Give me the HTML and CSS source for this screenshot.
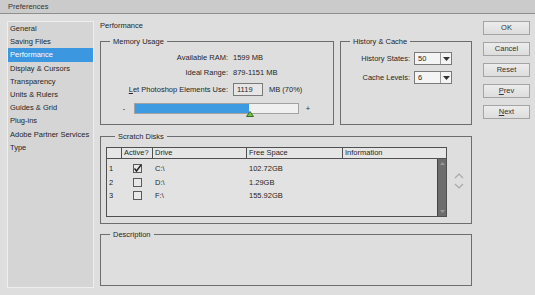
FILE: index.html
```html
<!DOCTYPE html>
<html>
<head>
<meta charset="utf-8">
<title>Preferences</title>
<link rel="stylesheet" href="styles.css">
</head>
<body>
<div class="window">
  <div class="titlebar">Preferences</div>
  <div class="content">
    <ul class="sidebar">
      <li class="nav-item">General</li>
      <li class="nav-item">Saving Files</li>
      <li class="nav-item selected">Performance</li>
      <li class="nav-item">Display &amp; Cursors</li>
      <li class="nav-item">Transparency</li>
      <li class="nav-item">Units &amp; Rulers</li>
      <li class="nav-item">Guides &amp; Grid</li>
      <li class="nav-item">Plug-ins</li>
      <li class="nav-item">Adobe Partner Services</li>
      <li class="nav-item">Type</li>
    </ul>

    <div class="main">
      <div class="page-title">Performance</div>
      <div class="top-row">
        <fieldset class="group mem">
          <legend>Memory Usage</legend>
          <div class="mem-row r1"><span class="lbl">Available RAM:</span><span class="val">1599 MB</span></div>
          <div class="mem-row r2"><span class="lbl">Ideal Range:</span><span class="val">879-1151 MB</span></div>
          <div class="mem-row r3"><span class="lbl"><u>L</u>et Photoshop Elements Use:</span><span class="val"><span class="numbox">1119</span><span class="pct">MB (70%)</span></span></div>
          <div class="slider-row">
            <span class="sign minus">-</span>
            <div class="track">
              <div class="fill" style="width:70%"></div>
              <svg class="thumb" width="8" height="6" viewBox="0 0 8 6"><path d="M4 0.5 L7.5 5.5 L0.5 5.5 Z" fill="#7ac143" stroke="#3b6b2a" stroke-width="1"/></svg>
            </div>
            <span class="sign plus">+</span>
          </div>
        </fieldset>
        <fieldset class="group hist">
          <legend>History &amp; Cache</legend>
          <div class="hist-row"><span class="hlbl">History States:</span>
            <div class="select"><span class="sel-val">50</span><span class="sel-btn"><svg width="7" height="4" viewBox="0 0 7 4"><path d="M0 0 H7 L3.5 4 Z" fill="#333"/></svg></span></div>
          </div>
          <div class="hist-row"><span class="hlbl">Cache Levels:</span>
            <div class="select"><span class="sel-val">6</span><span class="sel-btn"><svg width="7" height="4" viewBox="0 0 7 4"><path d="M0 0 H7 L3.5 4 Z" fill="#333"/></svg></span></div>
          </div>
        </fieldset>
      </div>

      <fieldset class="group scratch">
        <legend>Scratch Disks</legend>
        <div class="scratch-inner">
          <div class="table">
            <div class="thead">
              <div class="th"></div>
              <div class="th">Active?</div>
              <div class="th">Drive</div>
              <div class="th">Free Space</div>
              <div class="th last">Information</div>
            </div>
            <div class="tbody">
              <div class="rows">
                <div class="tr"><div class="td">1</div><div class="td c"><span class="cb"><svg width="9" height="9" viewBox="0 0 9 9"><path d="M1.5 4.5 L3.5 7 L8 1" fill="none" stroke="#222" stroke-width="1.4"/></svg></span></div><div class="td">C:\</div><div class="td">102.72GB</div><div class="td"></div></div>
                <div class="tr"><div class="td">2</div><div class="td c"><span class="cb"></span></div><div class="td">D:\</div><div class="td">1.29GB</div><div class="td"></div></div>
                <div class="tr"><div class="td">3</div><div class="td c"><span class="cb"></span></div><div class="td">F:\</div><div class="td">155.92GB</div><div class="td"></div></div>
              </div>
              <div class="scrollbar">
                <svg class="sb-arrow" width="5" height="3" viewBox="0 0 5 3"><path d="M0 3 L2.5 0 L5 3 Z" fill="#999"/></svg>
                <svg class="sb-arrow" width="5" height="3" viewBox="0 0 5 3"><path d="M0 0 L2.5 3 L5 0 Z" fill="#999"/></svg>
              </div>
            </div>
          </div>
          <div class="movers">
            <svg width="10" height="6" viewBox="0 0 10 6"><path d="M1 5 L5 1 L9 5" fill="none" stroke="#a8a8a8" stroke-width="1.2"/></svg>
            <svg width="10" height="6" viewBox="0 0 10 6"><path d="M1 1 L5 5 L9 1" fill="none" stroke="#a8a8a8" stroke-width="1.2"/></svg>
          </div>
        </div>
      </fieldset>

      <fieldset class="group desc">
        <legend>Description</legend>
      </fieldset>
    </div>

    <div class="buttons">
      <div class="btn">OK</div>
      <div class="btn">Cancel</div>
      <div class="btn">Reset</div>
      <div class="btn"><u>P</u>rev</div>
      <div class="btn"><u>N</u>ext</div>
    </div>
  </div>
</div>
</body>
</html>
```

FILE: styles.css
```css
* { box-sizing: border-box; }
html, body { margin: 0; padding: 0; }
body {
  font-family: "Liberation Sans", Arial, sans-serif;
  font-size: 7.5px;
  color: #262626;
  background: #dcdcdc;
}
.window {
  width: 535px;
  height: 295px;
  background: #dedede;
  overflow: hidden;
}
.titlebar {
  height: 14px;
  line-height: 13px;
  padding-left: 8px;
  background: #cbcbcb;
  border-bottom: 1px solid #8e8e8e;
  color: #333;
}
.content {
  display: flex;
  padding: 7px 0 0 7px;
  height: 276px;
}
.sidebar {
  list-style: none;
  margin: 0;
  padding: 0;
  width: 87px;
  height: 267px;
  border: 1px solid #eeeeee;
  background: #d5d5d5;
}
.nav-item {
  height: 13.2px;
  line-height: 13.2px;
  padding-left: 2px;
  white-space: nowrap;
}
.nav-item.selected {
  background: #3b97df;
  color: #fff;
}
.main {
  margin-left: 6px;
  width: 372px;
  display: flex;
  flex-direction: column;
}
.page-title {
  height: 10px;
  line-height: 10px;
}
.top-row {
  display: flex;
  gap: 6px;
  margin-top: 6px;
}
.group {
  margin: 0;
  padding: 0;
  min-width: 0;
  border: 1px solid #6d6d6d;
}
.group legend {
  margin-left: 9px;
  padding: 0 3px;
  line-height: 9px;
  height: 9px;
}
.mem {
  width: 234px;
  height: 88px;
  padding-top: 4px;
}
.mem-row {
  display: flex;
  align-items: center;
}
.mem-row.r1 { height: 14px; }
.mem-row.r2 { height: 16px; }
.mem-row.r3 { height: 18px; }
.lbl {
  width: 127px;
  text-align: right;
  margin-right: 5px;
  white-space: nowrap;
}
.val { display: flex; align-items: center; white-space: nowrap; }
.numbox {
  display: inline-block;
  width: 30px;
  height: 13px;
  line-height: 11px;
  border: 1px solid #7a7a7a;
  background: #e6e6e6;
  padding-left: 3px;
}
.pct { margin-left: 6px; }
.slider-row {
  display: flex;
  align-items: center;
  margin-top: 4px;
  height: 13px;
}
.sign { width: 10px; text-align: center; }
.minus { margin-left: 18px; margin-right: 5px; }
.track {
  position: relative;
  width: 165px;
  height: 11px;
  border: 1px solid #a2a2a2;
  background: #f0f0f0;
}
.fill {
  height: 100%;
  background: #3d9be2;
}
.thumb {
  position: absolute;
  left: 111px;
  top: 7px;
}
.plus { margin-left: 4px; }
.hist {
  width: 132px;
  height: 88px;
  padding-top: 6px;
}
.hist-row {
  display: flex;
  align-items: center;
  height: 13px;
  margin-bottom: 6px;
}
.hlbl {
  width: 69px;
  text-align: right;
  margin-right: 4px;
  white-space: nowrap;
}
.select {
  display: flex;
  width: 38px;
  height: 13px;
  border: 1px solid #7a7a7a;
  background: #f4f4f4;
}
.sel-val {
  flex: 1;
  line-height: 11px;
  padding-left: 3px;
}
.sel-btn {
  width: 11px;
  border-left: 1px solid #9a9a9a;
  display: flex;
  align-items: center;
  justify-content: center;
}
.scratch {
  margin-top: 7px;
  height: 92px;
  padding: 6px 0 0 5px;
}
.scratch-inner {
  display: flex;
}
.table {
  width: 341px;
  height: 70px;
  border: 1px solid #505050;
  display: flex;
  flex-direction: column;
  background: #e2e2e2;
}
.thead {
  display: grid;
  grid-template-columns: 15px 31px 94px 96px 1fr;
  height: 11px;
  border-bottom: 1px solid #505050;
  background: #e6e6e6;
}
.th {
  border-right: 1px solid #505050;
  line-height: 10px;
  padding-left: 2px;
  white-space: nowrap;
}
.th.last { border-right: none; }
.tbody {
  flex: 1;
  display: flex;
}
.rows {
  flex: 1;
  padding-top: 3px;
}
.tr {
  display: grid;
  grid-template-columns: 15px 31px 94px 96px 1fr;
  height: 13.5px;
  align-items: center;
}
.td {
  padding-left: 2px;
  white-space: nowrap;
}
.td.c {
  display: flex;
  justify-content: center;
  padding-left: 0;
}
.cb {
  display: block;
  width: 9px;
  height: 9px;
  border: 1px solid #5a5a5a;
  background: #e8e8e8;
}
.cb svg { display: block; margin: -1px 0 0 -1px; }
.scrollbar {
  width: 9px;
  background: #6d6d6d;
  border-left: 1px solid #444;
  display: flex;
  flex-direction: column;
  justify-content: space-between;
  align-items: center;
  padding: 3px 0;
}
.sb-arrow { display: block; }
.movers {
  display: flex;
  flex-direction: column;
  gap: 4px;
  margin: 26px 0 0 7px;
}
.movers svg { display: block; }
.desc {
  margin-top: 6px;
  height: 56px;
}
.buttons {
  margin-left: 11px;
  width: 47px;
  display: flex;
  flex-direction: column;
  gap: 7px;
}
.btn {
  height: 14px;
  line-height: 12px;
  text-align: center;
  border: 1px solid #a4a4a4;
  background: linear-gradient(#ececec, #dddddd);
  color: #333;
}
```
